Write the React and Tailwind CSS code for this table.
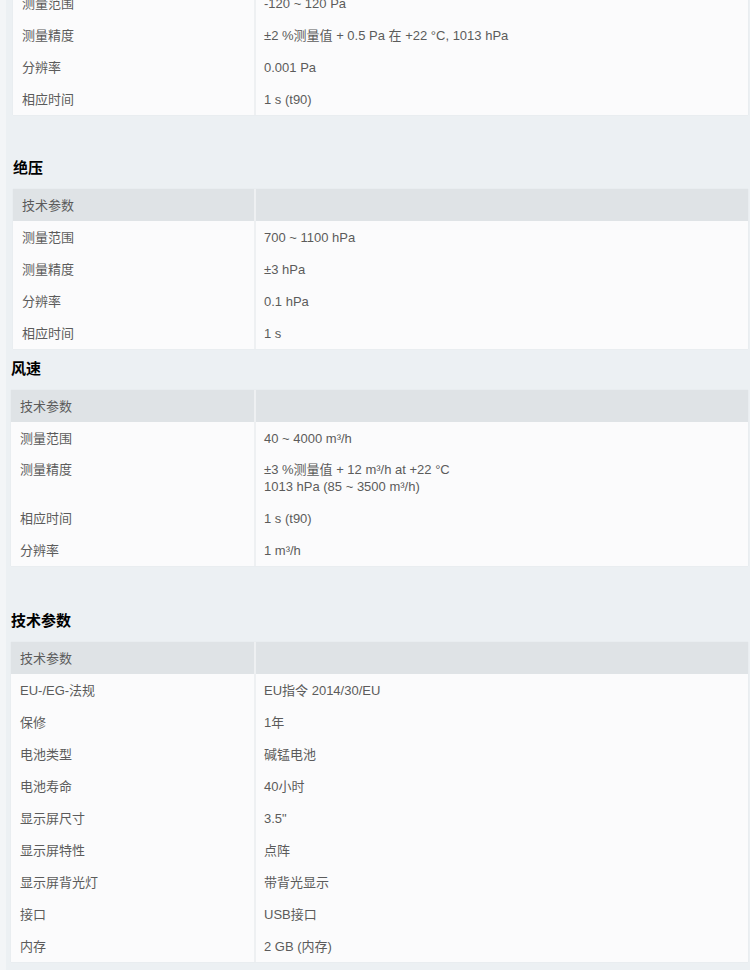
import React from "react";

const sections = [
  {
    title: null,
    left: "ml-[13px]",
    top: "-mt-[13px]",
    header: false,
    rows: [
      ["测量范围", ["-120 ~ 120 Pa"]],
      ["测量精度", ["±2 %测量值 + 0.5 Pa 在 +22 °C, 1013 hPa"]],
      ["分辨率", ["0.001 Pa"]],
      ["相应时间", ["1 s (t90)"]],
    ],
  },
  {
    title: "绝压",
    left: "ml-[13px]",
    top: "pt-[43px]",
    header: true,
    rows: [
      ["测量范围", ["700 ~ 1100 hPa"]],
      ["测量精度", ["±3 hPa"]],
      ["分辨率", ["0.1 hPa"]],
      ["相应时间", ["1 s"]],
    ],
  },
  {
    title: "风速",
    left: "ml-[11px]",
    top: "pt-[10px]",
    header: true,
    rows: [
      ["测量范围", ["40 ~ 4000 m³/h"]],
      ["测量精度", ["±3 %测量值 + 12 m³/h at +22 °C", "1013 hPa (85 ~ 3500 m³/h)"]],
      ["相应时间", ["1 s (t90)"]],
      ["分辨率", ["1 m³/h"]],
    ],
  },
  {
    title: "技术参数",
    left: "ml-[11px]",
    top: "pt-[45px]",
    header: true,
    rows: [
      ["EU-/EG-法规", ["EU指令 2014/30/EU"]],
      ["保修", ["1年"]],
      ["电池类型", ["碱锰电池"]],
      ["电池寿命", ["40小时"]],
      ["显示屏尺寸", ["3.5\""]],
      ["显示屏特性", ["点阵"]],
      ["显示屏背光灯", ["带背光显示"]],
      ["接口", ["USB接口"]],
      ["内存", ["2 GB (内存)"]],
    ],
  },
];

function Row({ label, value, head }) {
  const multi = value.length > 1;
  const bg = head ? "bg-[#dfe3e6]" : "bg-[#fbfbfc]";
  return (
    <div className="flex">
      <div
        className={`flex-1 flex ${multi ? "items-start py-[7px]" : "items-center h-[32px]"} ${bg} pl-[9px]`}
      >
        {label}
      </div>
      <div className="w-[2px] bg-[#eef0f2]" />
      <div
        className={`w-[492px] flex flex-col ${multi ? "py-[7px]" : "justify-center h-[32px]"} ${bg} pl-[8px]`}
      >
        {value.map((v, i) => (
          <span key={i}>{v}</span>
        ))}
      </div>
    </div>
  );
}

function Section({ s }) {
  return (
    <div className={s.top}>
      {s.title && (
        <h3 className={`${s.left} h-[20px] leading-[20px] mb-[11px] text-[15px] font-bold text-black`}>
          {s.title}
        </h3>
      )}
      <div className={`${s.left} mr-[2px] flex flex-col shadow-[0_0_1px_rgba(0,0,0,0.08)]`}>
        {s.header && <Row label="技术参数" value={[""]} head />}
        {s.rows.map(([l, v], i) => (
          <Row key={i} label={l} value={v} />
        ))}
      </div>
    </div>
  );
}

export default function App() {
  return (
    <div
      className="w-[750px] h-[970px] overflow-hidden flex bg-[#ecf0f3] text-[13px] leading-[17px] text-[#5b5b5b]"
      style={{ fontFamily: '"Liberation Sans", "Noto Sans CJK SC", sans-serif' }}
    >
      <div className="w-[6px] bg-[#f3f5f7]" />
      <div className="flex-1 flex flex-col -ml-[6px]">
        {sections.map((s, i) => (
          <Section key={i} s={s} />
        ))}
      </div>
    </div>
  );
}
